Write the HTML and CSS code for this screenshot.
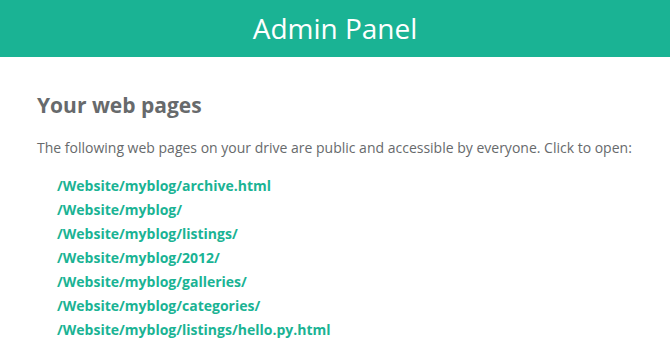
FILE: index.html
```html
<!DOCTYPE html>
<html lang="en">
<head>
    <meta charset="UTF-8">
    <meta name="viewport" content="width=device-width, initial-scale=1.0">
    <title>Admin Panel</title>
    <link rel="stylesheet" href="styles.css">
</head>
<body>
    <div class="header">Admin Panel</div>
    <div class="content">
        <h2>Your web pages</h2>
        <p>The following web pages on your drive are public and accessible by everyone. Click to open:</p>
        <ul class="pages">
            <li><a href="#">/Website/myblog/archive.html</a></li>
            <li><a href="#">/Website/myblog/</a></li>
            <li><a href="#">/Website/myblog/listings/</a></li>
            <li><a href="#">/Website/myblog/2012/</a></li>
            <li><a href="#">/Website/myblog/galleries/</a></li>
            <li><a href="#">/Website/myblog/categories/</a></li>
            <li><a href="#">/Website/myblog/listings/hello.py.html</a></li>
        </ul>
    </div>
</body>
</html>
```

FILE: styles.css
```css
body {
    font-family: "Open Sans", sans-serif;
    margin: 0;
    color: #676a6c;
    background-color: white;
}
.header {
    background-color: #1ab394;
    color: white;
    font-size: 28px;
    height: 57px;
    line-height: 57px;
    text-align: center;
}
.content {
    padding: 30px 37px 10px;
}
h2 {
    font-size: 21px;
    line-height: 36px;
    font-weight: 700;
    margin: 0 0 15px 0;
}
p {
    font-size: 14px;
    line-height: 20px;
    margin: 0 0 16px 0;
}
.pages {
    list-style: none;
    margin: 0;
    padding: 0 0 0 20px;
}
.pages li {
    font-size: 14px;
    line-height: 24px;
}
.pages a {
    color: #1ab394;
    font-weight: 700;
    text-decoration: none;
}
```
